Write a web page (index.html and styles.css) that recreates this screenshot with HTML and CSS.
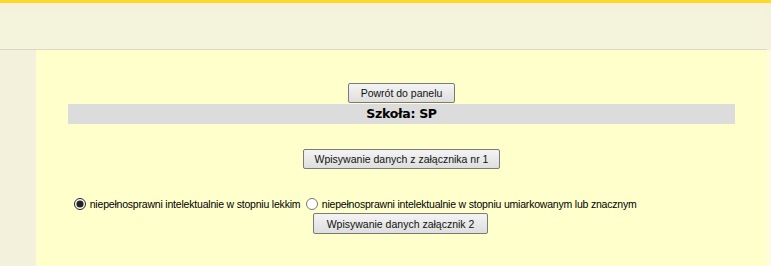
FILE: index.html
```html
<!DOCTYPE html>
<html lang="pl">
<head>
  <meta charset="UTF-8" />
  <title>Panel</title>
  <link rel="stylesheet" href="styles.css">
</head>
<body>
  <div class="top-line"></div>
  <div class="header"></div>

  <div class="page">
    <div class="sidebar"></div>
    <div class="main">
      <button class="btn">Powrót do panelu</button>
      <div class="school">Szkoła: SP</div>

      <button class="btn btn-wide">Wpisywanie danych z załącznika nr 1</button>

      <form class="choice">
        <div class="options">
          <label><input type="radio" name="stopien" checked> niepełnosprawni intelektualnie w stopniu lekkim</label>
          <label><input type="radio" name="stopien"> niepełnosprawni intelektualnie w stopniu umiarkowanym lub znacznym</label>
        </div>
        <button type="button" class="btn">Wpisywanie danych załącznik 2</button>
      </form>
    </div>
    <div class="edge"></div>
  </div>
</body>
</html>
```

FILE: styles.css
```css
* {
  box-sizing: border-box;
}

body {
  margin: 0;
  background: #f4f2dc;
  font-family: Tahoma, "DejaVu Sans", sans-serif;
  height: 266px;
  overflow: hidden;
}

.top-line {
  height: 3px;
  background: #ffd924;
}

.header {
  height: 47px;
  background: linear-gradient(#f8f0dc 0px, #f4f3dc 10px, #f4f3dc 100%);
  border-bottom: 1px solid #dbd9c5;
  margin-right: 4px;
}

.page {
  display: flex;
  height: 216px;
}

.sidebar {
  width: 36px;
  background: #f3f1dc;
}

.main {
  flex: 1;
  background: #ffffcc;
  text-align: center;
  padding-top: 32px;
}

.edge {
  width: 4px;
  background: #fffbe0;
}

.btn {
  font-family: "Liberation Sans", Arial, sans-serif;
  font-size: 10.5px;
  color: #111;
  background: linear-gradient(#f4f4f4, #dedede);
  border: 1px solid #7a7a7a;
  border-radius: 2px;
  height: 20px;
  padding: 0 12px;
  margin: 0;
}

.btn-wide {
  margin-top: 25px;
  padding: 0 11px;
}

.school {
  margin: 1px 32px 0;
  background: #dcdcdc;
  height: 20px;
  line-height: 20px;
  font-weight: bold;
  font-size: 12.5px;
  font-family: "DejaVu Sans", sans-serif;
  letter-spacing: -0.3px;
}

.choice {
  margin-top: 29px;
  font-size: 10.5px;
  font-family: "Liberation Sans", sans-serif;
  letter-spacing: -0.2px;
}

.options {
  text-align: left;
  padding-left: 35px;
}

.choice input {
  margin: 0 1px 0 3px;
  width: 12px;
  height: 12px;
  vertical-align: -2px;
  accent-color: #222;
}

.choice .btn {
  display: block;
  margin: 3px auto 0;
  height: 21px;
  letter-spacing: 0;
  padding: 0 13px;
  transform: translateX(-1px);
}
```
